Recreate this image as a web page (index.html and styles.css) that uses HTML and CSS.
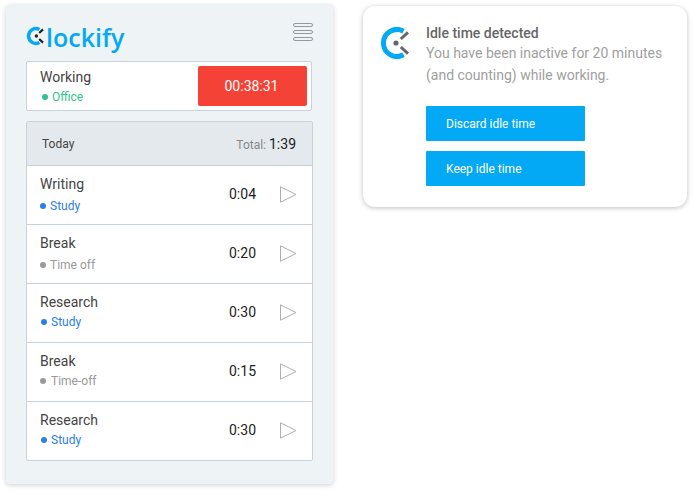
FILE: index.html
```html
<!DOCTYPE html>
<html lang="en">
<head>
  <meta charset="UTF-8" />
  <title>Clockify idle time</title>
  <link rel="stylesheet" href="styles.css">
</head>
<body>
  <div class="panel">
    <div class="panel-head">
      <div class="logo">
        <svg class="logo-mark" viewBox="0 0 20 24" width="20" height="24">
          <path d="M13.5 4.5 A7.4 7.4 0 1 0 13.5 17.5" fill="none" stroke="#03a9f4" stroke-width="3.4"/>
          <path d="M17 4.4 L13.2 8 M13.2 14 L17 17.6" fill="none" stroke="#222" stroke-width="2.2"/>
          <circle cx="10.4" cy="11" r="1.7" fill="#222"/>
        </svg>
        <span class="logo-text">lockify</span>
      </div>
      <div class="burger"><span></span><span></span><span></span></div>
    </div>

    <div class="running">
      <div class="entry-info">
        <div class="entry-name">Working</div>
        <div class="entry-project green"><i class="dot"></i>Office</div>
      </div>
      <div class="timer">00:38:31</div>
    </div>

    <div class="list">
      <div class="list-head">
        <span>Today</span>
        <span class="total">Total: <b>1:39</b></span>
      </div>

      <div class="row">
        <div class="entry-info">
          <div class="entry-name">Writing</div>
          <div class="entry-project blue"><i class="dot"></i>Study</div>
        </div>
        <div class="time">0:04</div>
        <svg class="play" viewBox="0 0 17 17" width="17" height="17"><path d="M.5.8 16 8.5.5 16.2z" fill="none" stroke="#aeaeae"/></svg>
      </div>

      <div class="row">
        <div class="entry-info">
          <div class="entry-name">Break</div>
          <div class="entry-project grey"><i class="dot"></i>Time off</div>
        </div>
        <div class="time">0:20</div>
        <svg class="play" viewBox="0 0 17 17" width="17" height="17"><path d="M.5.8 16 8.5.5 16.2z" fill="none" stroke="#aeaeae"/></svg>
      </div>

      <div class="row">
        <div class="entry-info">
          <div class="entry-name">Research</div>
          <div class="entry-project blue tight"><i class="dot"></i>Study</div>
        </div>
        <div class="time">0:30</div>
        <svg class="play" viewBox="0 0 17 17" width="17" height="17"><path d="M.5.8 16 8.5.5 16.2z" fill="none" stroke="#aeaeae"/></svg>
      </div>

      <div class="row">
        <div class="entry-info">
          <div class="entry-name">Break</div>
          <div class="entry-project grey tight"><i class="dot"></i>Time-off</div>
        </div>
        <div class="time">0:15</div>
        <svg class="play" viewBox="0 0 17 17" width="17" height="17"><path d="M.5.8 16 8.5.5 16.2z" fill="none" stroke="#aeaeae"/></svg>
      </div>

      <div class="row">
        <div class="entry-info">
          <div class="entry-name">Research</div>
          <div class="entry-project blue tight"><i class="dot"></i>Study</div>
        </div>
        <div class="time">0:30</div>
        <svg class="play" viewBox="0 0 17 17" width="17" height="17"><path d="M.5.8 16 8.5.5 16.2z" fill="none" stroke="#aeaeae"/></svg>
      </div>
    </div>
  </div>

  <div class="idle-card">
    <svg class="idle-mark" viewBox="0 0 34 32" width="34" height="32">
      <path d="M23.5 4.2 A13.5 13.5 0 1 0 23.5 27.8" fill="none" stroke="#03a9f4" stroke-width="5"/>
      <path d="M28 5.4 L20.8 12 M20.8 20 L28 26.6" fill="none" stroke="#666" stroke-width="3"/>
      <circle cx="16" cy="16" r="2.6" fill="#666"/>
    </svg>
    <div class="idle-body">
      <h2>Idle time detected</h2>
      <p>You have been inactive for 20 minutes<br>(and counting) while working.</p>
      <button type="button">Discard idle time</button>
      <button type="button">Keep idle time</button>
    </div>
  </div>
</body>
</html>
```

FILE: styles.css
```css
* {
  margin: 0;
  padding: 0;
  box-sizing: border-box;
}

body {
  font-family: Roboto, sans-serif;
  background: #fff;
  color: #444;
  width: 693px;
  height: 491px;
  overflow: hidden;
  display: flex;
  align-items: flex-start;
  padding: 5px 0 0 6px;
}

.panel {
  width: 327px;
  height: 479px;
  background: #eef3f6;
  border-radius: 3px;
  box-shadow: 0 1px 5px rgba(0, 0, 0, 0.2);
  padding: 0 21px 0 20px;
  flex-shrink: 0;
}

.panel-head {
  height: 56px;
  display: flex;
  justify-content: space-between;
  align-items: flex-start;
  padding-top: 17px;
}

.logo {
  display: flex;
  align-items: center;
  height: 30px;
}

.logo-mark {
  display: block;
}

.logo-text {
  font-family: "Open Sans", sans-serif;
  font-size: 25px;
  font-weight: 600;
  line-height: 30px;
  color: #03a9f4;
}

.burger {
  width: 20px;
  margin-right: -1px;
  display: flex;
  flex-direction: column;
  gap: 3px;
  margin-top: 1px;
}

.burger span {
  display: block;
  height: 4px;
  border: 1px solid #8f9aa1;
  border-radius: 2px;
}

.running {
  width: 286px;
  height: 50px;
  background: #fff;
  border: 1px solid #c6d2dc;
  border-radius: 2px;
  display: flex;
  align-items: center;
  justify-content: space-between;
  padding: 0 4px 0 13px;
}

.entry-name {
  font-size: 14px;
  line-height: 18px;
  color: #444;
}

.entry-project {
  font-size: 12px;
  line-height: 14px;
  margin-top: 6px;
  display: flex;
  align-items: center;
}

.entry-project.tight {
  margin-top: 4px;
  margin-left: 1px;
}

.running .entry-project {
  margin-top: 4px;
}

.dot {
  width: 6px;
  height: 6px;
  border-radius: 50%;
  background: currentColor;
  margin-right: 4px;
}

.green {
  color: #2fc48d;
}

.green .dot {
  margin-left: 2px;
}

.blue {
  color: #2b7de9;
}

.grey {
  color: #999;
}

.grey.tight .dot {
  margin-left: -1px;
  margin-right: 5px;
}

.timer {
  width: 109px;
  height: 40px;
  background: #f44336;
  border-radius: 2px;
  color: #fff;
  font-size: 14px;
  padding-right: 2px;
  display: flex;
  align-items: center;
  justify-content: center;
}

.list {
  width: 287px;
  margin-top: 10px;
  background: #fff;
  border: 1px solid #c6d2dc;
  border-radius: 2px;
}

.list-head {
  height: 43px;
  background: #e4e9ed;
  display: flex;
  align-items: center;
  justify-content: space-between;
  padding: 0 16px 0 15px;
  font-size: 12px;
  color: #444;
}

.total {
  color: #888;
}

.total b {
  font-weight: 400;
  font-size: 14px;
  color: #222;
}

.row {
  height: 59px;
  border-top: 1px solid #c6d2dc;
  display: flex;
  align-items: center;
  padding: 0 15px 2px 13px;
}

.row .entry-info {
  flex: 1;
  align-self: flex-start;
  padding-top: 9px;
}

.time {
  font-size: 14px;
  color: #222;
  margin-right: 24px;
}

.play {
  display: block;
}

.idle-card {
  width: 324px;
  height: 201px;
  margin: 1px 0 0 30px;
  background: #fff;
  border-radius: 12px;
  box-shadow: 0 1px 5px rgba(0, 0, 0, 0.25);
  padding: 19px 0 0 17px;
  display: flex;
  flex-shrink: 0;
}

.idle-mark {
  display: block;
  margin: 2px 12px 0 0;
  flex-shrink: 0;
}

.idle-body h2 {
  font-size: 14px;
  line-height: 16px;
  font-weight: 500;
  color: #666;
}

.idle-body p {
  font-size: 14px;
  line-height: 22px;
  color: #a0a0a0;
  margin-top: 1px;
  margin-bottom: 20px;
}

.idle-body button {
  display: block;
  width: 159px;
  height: 35px;
  background: #03a9f4;
  border: none;
  border-radius: 1px;
  color: #fff;
  font-family: Roboto, sans-serif;
  font-size: 12px;
  text-align: left;
  padding-left: 20px;
  margin-bottom: 10px;
}
```
